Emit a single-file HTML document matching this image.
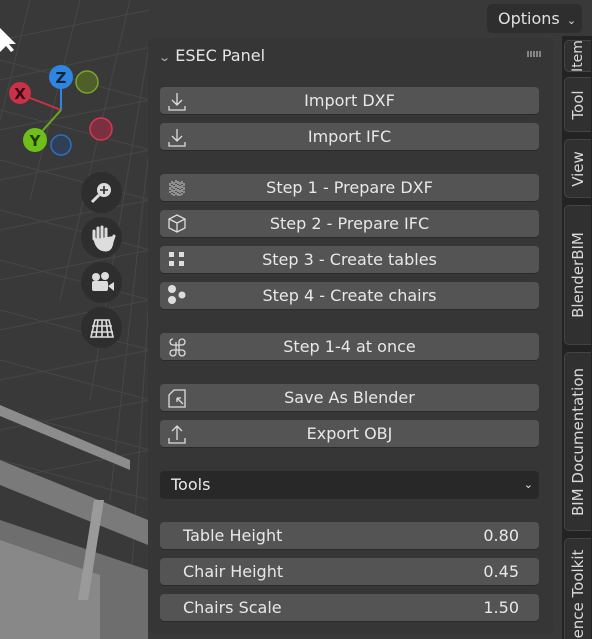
<!DOCTYPE html>
<html><head><style>
*{margin:0;padding:0;box-sizing:border-box}
html{width:592px;height:639px;overflow:hidden;background:#393939}
body{width:592px;height:639px;overflow:hidden;background:#393939;font-family:"DejaVu Sans","Liberation Sans",sans-serif;position:relative;color:#e6e6e6}
.abs{position:absolute}
.panel{left:148px;top:38px;width:405px;height:596px;background:#363636;border-radius:5px}
.btn{position:absolute;left:160px;width:379px;height:27px;background:#545454;border-radius:4px;font-size:16px;text-align:center;line-height:27px;color:#e8e8e8;box-shadow:0 1px 0 #2a2a2a}
.btn svg{position:absolute;left:6px;top:3px}
.fld{text-align:left;padding-left:23px}
.fld span{position:absolute;right:20px}
.tab{position:absolute;left:564px;width:27px;background:#303030;border:1px solid #444;border-right:none;border-radius:5px 0 0 5px}
.tab div{position:absolute;left:50%;top:50%;transform:translate(-50%,-50%) rotate(-90deg);white-space:nowrap;font-size:15px;color:#d8d8d8}
.nav{position:absolute;left:81px;width:41px;height:41px;border-radius:50%;background:#2e2e2e}
</style></head><body>
<svg class="abs" style="left:0;top:0" width="592" height="639">
<g stroke="#474747" stroke-width="1">
<path d="M0 40 L150 10 M0 80 L160 45 M0 130 L150 100 M0 180 L150 150 M0 230 L150 200 M0 280 L150 250 M0 330 L150 300 M0 380 L150 350 M0 430 L150 400 M0 480 L150 450"/>
<path d="M30 0 L0 120 M80 0 L30 200 M130 0 L60 300 M150 40 L90 400 M150 140 L110 500 M150 280 L130 600"/>
<path d="M0 160 L150 200 M0 210 L150 250 M0 260 L150 300 M0 310 L150 350 M0 360 L150 400 M0 410 L150 450 M0 460 L150 500 M0 60 L150 100 M0 110 L150 150"/>
</g>
<path d="M0 405 L130 460 L130 470 L0 416Z" fill="#8c8c8c"/>
<path d="M0 460 L148 520 L148 545 L0 485Z" fill="#7a7a7a"/>
<path d="M0 520 L148 570 L148 639 L0 639Z" fill="#6e6e6e"/>
<path d="M0 540 L100 575 L100 639 L0 639Z" fill="#888"/>
<path d="M94 500 L104 500 L88 600 L78 600Z" fill="#9a9a9a"/>
<path d="M0 28 L0 52 L6 46 L11 52 L14 50 L9 44 L16 44Z" fill="#fff"/>
<line x1="61" y1="110" x2="61" y2="80" stroke="#2f86e0" stroke-width="2"/>
<line x1="61" y1="110" x2="20" y2="94" stroke="#c83248" stroke-width="2"/>
<line x1="61" y1="110" x2="36" y2="138" stroke="#6aa81e" stroke-width="2"/>
<circle cx="87" cy="82" r="11" fill="#4f5f2a" stroke="#7ba52a" stroke-width="1.5"/>
<circle cx="101" cy="129" r="11" fill="#7a3040" stroke="#dd3550" stroke-width="1.5"/>
<circle cx="61" cy="145" r="10" fill="#2e3f56" stroke="#2f6fc0" stroke-width="1.5"/>
<circle cx="61" cy="77" r="12" fill="#2f86e0"/><text x="61" y="83" font-size="15" font-weight="bold" text-anchor="middle" fill="#10243a" font-family="DejaVu Sans">Z</text>
<circle cx="20" cy="93" r="11" fill="#c83248"/><text x="20" y="99" font-size="15" font-weight="bold" text-anchor="middle" fill="#3a0a12" font-family="DejaVu Sans">X</text>
<circle cx="35" cy="140" r="12" fill="#6fbf1a"/><text x="35" y="146" font-size="15" font-weight="bold" text-anchor="middle" fill="#1f3a06" font-family="DejaVu Sans">Y</text>
</svg>
<div class="nav" style="top:172px"><svg width="41" height="41"><circle cx="23" cy="18" r="7" fill="#ddd"/><path d="M19 18h8M23 14v8" stroke="#2e2e2e" stroke-width="1.6"/><path d="M18 23l-7 7" stroke="#ddd" stroke-width="3"/></svg></div>
<div class="nav" style="top:217px"><svg width="41" height="41"><path d="M13 22v-8M17 21v-10M21 21v-11M25 21v-9M14 22 q2 11 11 11 q5 0 6-8 l2-6" stroke="#ddd" stroke-width="3" fill="#ddd" stroke-linecap="round"/></svg></div>
<div class="nav" style="top:262px"><svg width="41" height="41"><circle cx="15" cy="15" r="4" fill="#ddd"/><circle cx="24" cy="14" r="4" fill="#ddd"/><rect x="11" y="19" width="16" height="10" rx="2" fill="#ddd"/><path d="M27 24l6-4v9z" fill="#ddd"/></svg></div>
<div class="nav" style="top:307px"><svg width="41" height="41"><path d="M14 13h14l4 17h-22z M11 19h20M10 25h22M17 13l-2 17M25 13l2 17M21 13v17" stroke="#ddd" stroke-width="1.6" fill="none"/></svg></div>
<div class="abs" style="left:487px;top:4px;width:95px;height:29px;background:#2e2e2e;border-radius:5px;font-size:16px;line-height:29px;padding-left:11px;color:#e0e0e0">Options <span style="font-size:11px;margin-left:2px">&#8964;</span></div>
<div class="abs" style="left:562px;top:36px;width:30px;height:603px;background:#232323"></div>
<div class="tab" style="top:40px;height:32px"><div style="font-size:14px">Item</div></div>
<div class="tab" style="top:77px;height:55px"><div>Tool</div></div>
<div class="tab" style="top:139px;height:59px"><div>View</div></div>
<div class="tab" style="top:205px;height:140px"><div>BlenderBIM</div></div>
<div class="tab" style="top:352px;height:179px"><div>BIM Documentation</div></div>
<div class="tab" style="top:538px;height:101px;border-bottom:none;border-radius:5px 0 0 0;overflow:hidden"><div style="top:55%">ence Toolkit</div></div>
<div class="abs panel"></div>
<div class="abs" style="left:160px;top:46px;font-size:16px;color:#e6e6e6"><span style="font-size:11px;display:inline-block;transform:scaleX(1.4);margin-right:6px;color:#bbb">&#8964;</span>ESEC Panel</div>
<div class="abs" style="left:527px;top:51px;width:14px;height:6px;background:repeating-linear-gradient(90deg,#999 0 2px,transparent 2px 3px);opacity:.8"></div>
<div class="btn" style="top:87px"><svg width="22" height="22"><path d="M11 3v12M6 10l5 5 5-5M3 16v4h16v-4" stroke="#ddd" stroke-width="1.3" fill="none"/></svg>Import DXF</div>
<div class="btn" style="top:123px"><svg width="22" height="22"><path d="M11 3v12M6 10l5 5 5-5M3 16v4h16v-4" stroke="#ddd" stroke-width="1.3" fill="none"/></svg>Import IFC</div>
<div class="btn" style="top:174px"><svg width="22" height="22"><path d="M4 6v10M6 4v14M8 5v14M10 3v16M12 4v15M14 5v14M16 4v14M18 6v10" stroke="#ccc" stroke-width="1" stroke-dasharray="3 1"/></svg>Step 1 - Prepare DXF</div>
<div class="btn" style="top:210px"><svg width="22" height="22"><path d="M11 2l8 4v9l-8 4-8-4V6z M3 6l8 4 8-4M11 10v9" stroke="#ddd" stroke-width="1.3" fill="none"/></svg>Step 2 - Prepare IFC</div>
<div class="btn" style="top:246px"><svg width="22" height="22"><rect x="3" y="3" width="5" height="5" fill="#ddd"/><rect x="13" y="3" width="5" height="5" fill="#ddd"/><rect x="3" y="12" width="5" height="5" fill="#ddd"/><rect x="13" y="12" width="5" height="5" fill="#ddd"/></svg>Step 3 - Create tables</div>
<div class="btn" style="top:282px"><svg width="22" height="22"><circle cx="6" cy="4" r="4" fill="#ddd"/><circle cx="6" cy="15" r="4" fill="#ddd"/><circle cx="16" cy="10" r="3.5" fill="#ddd"/></svg>Step 4 - Create chairs</div>
<div class="btn" style="top:333px"><svg width="22" height="22"><path d="M7 3a3 3 0 1 0 0 6h9a3 3 0 1 0-3-3v11a3 3 0 1 0 3-3H7a3 3 0 1 0 3 3V6" stroke="#ddd" stroke-width="1.3" fill="none"/></svg>Step 1-4 at once</div>
<div class="btn" style="top:384px"><svg width="22" height="22"><path d="M3 20V8l5-5h11v17z M11 11l6 6M11 11v4M11 11h4" stroke="#ddd" stroke-width="1.3" fill="none"/></svg>Save As Blender</div>
<div class="btn" style="top:420px"><svg width="22" height="22"><path d="M11 17V3M6 8l5-5 5 5M3 15v5h16v-5" stroke="#ddd" stroke-width="1.3" fill="none"/></svg>Export OBJ</div>
<div class="btn" style="top:471px;background:#282828;text-align:left;padding-left:11px">Tools<span style="position:absolute;right:6px;font-size:11px">&#8964;</span></div>
<div class="btn fld" style="top:522px">Table Height<span>0.80</span></div>
<div class="btn fld" style="top:558px">Chair Height<span>0.45</span></div>
<div class="btn fld" style="top:594px">Chairs Scale<span>1.50</span></div>
</body></html>
